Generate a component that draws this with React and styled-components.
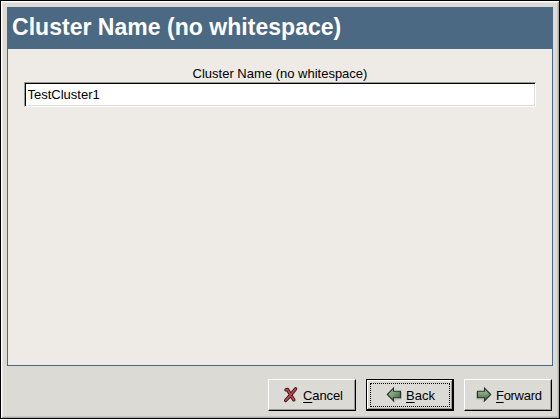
import React from 'react';
import styled, { createGlobalStyle } from 'styled-components';

const Global = createGlobalStyle`
  * { box-sizing: border-box; }
  body { margin: 0; overflow: hidden; }
`;
const Window = styled.main`
  width: 560px;
  height: 419px;
  background: #dcdad5;
  border: 1px solid #000;
  box-shadow: inset 1px 1px #fff, inset -1px -1px #aaa9a6, inset 2px 2px #ece7e5, inset -2px -2px #c8c6c2;
  padding: 6px;
  display: flex;
  flex-direction: column;
  color: #000;
  font: 13px/15px "Liberation Sans", Arial, sans-serif;
`;
const Panel = styled.section`
  height: 359px;
  background: #eeebe6;
  border: 1px solid #4b6983;
  display: flex;
  flex-direction: column;
`;
const Header = styled.h1`
  margin: 0;
  height: 41px;
  flex: none;
  background: #4b6983;
  color: #fff;
  padding: 5px 4px;
  font-size: 23px;
  line-height: 28px;
  letter-spacing: 0.03px;
  font-weight: bold;
  white-space: nowrap;
`;
const Field = styled.label`
  display: flex;
  flex-direction: column;
  padding: 17px 16px 0;
`;
const Caption = styled.span`
  height: 16px;
  text-align: center;
  line-height: 16px;
`;
const Input = styled.input`
  width: 512px;
  height: 25px;
  background: #fff;
  border: 1px solid;
  border-color: #9c9a94 #fff #fff #9c9a94;
  box-shadow: inset 1px 1px #000, inset -1px -1px #dcdad5;
  outline: none;
  padding: 1px 3px 2px 2.5px;
  color: #000;
  font: 13px/20px "Liberation Sans", Arial, sans-serif;
`;
const Actions = styled.footer`
  display: flex;
  justify-content: flex-end;
  gap: 10px;
  padding: 13px 1px 0 0;
`;
const Button = styled.button`
  width: 88px;
  height: 32px;
  display: flex;
  align-items: center;
  justify-content: flex-start;
  gap: 4px;
  padding: 0 0 0 ${p => p.$start};
  background: #dcdad5;
  color: #000;
  border: 1px solid;
  border-color: ${p => p.$active ? '#000' : '#fff #000 #000 #fff'};
  box-shadow: ${p => p.$active
    ? 'inset -1px -1px #000, inset 1px 1px #fff, inset -2px -2px #9c9a94'
    : 'inset -1px -1px #9c9a94'};
  outline: ${p => p.$active ? '1px dotted #000' : 'none'};
  outline-offset: -5px;
  font: 13px/15px "Liberation Sans", Arial, sans-serif;
  letter-spacing: ${p => p.$spacing || '0'};
`;
const Mnemonic = styled.span`
  text-decoration: underline;
  text-decoration-thickness: 1px;
  text-underline-offset: 2px;
`;
const Icon = styled.svg`
  width: 16px;
  height: 16px;
  flex: none;
  overflow: visible;
`;

function CancelIcon() {
  return (
    <Icon viewBox="0 0 16 16" fill="none" strokeLinecap="round" strokeLinejoin="round">
      <path d="M3 2.8 4.5 2.4 7.3 7.4 10.8 12.8M12.6 1.9 8.5 6.8 5.9 10 2.7 13.4" stroke="#201314" strokeWidth="3.4" />
      <path d="M3 2.8 4.5 2.4 7.3 7.4 10.8 12.8M12.6 1.9 8.5 6.8 5.9 10 2.7 13.4" stroke="#c5424d" strokeWidth="1.9" />
    </Icon>
  );
}
function ArrowIcon({ forward }) {
  return (
    <Icon viewBox="0 0 16 16">
      <defs>
        <linearGradient id={forward ? 'forward' : 'back'} x1="0" y1="0" x2={forward ? '0' : '1'} y2="1">
          <stop offset="0" stopColor="#a9c4a6" />
          <stop offset=".45" stopColor="#7da27a" />
          <stop offset="1" stopColor="#305433" />
        </linearGradient>
      </defs>
      <g transform={forward ? 'translate(16 0) scale(-1 1)' : undefined}>
        <path d="M2 8.5 9 15v-3H15.5V5" fill="none" stroke="#b9b8b2" strokeWidth="1" />
        <path d="M1.3 7.5 7.5 1.2v3.1H14.5v6.4H7.5v3.3Z" fill={forward ? 'url(#forward)' : 'url(#back)'} stroke="#283228" strokeWidth="1.1" />
      </g>
    </Icon>
  );
}

export default function App() {
  return (
    <>
      <Global />
      <Window>
        <Panel>
          <Header>Cluster Name (no whitespace)</Header>
          <Field>
            <Caption>Cluster Name (no whitespace)</Caption>
            <Input defaultValue="TestCluster1" spellCheck={false} />
          </Field>
        </Panel>
        <Actions>
          <Button $start="14px" $spacing="-0.1px"><CancelIcon /><span><Mnemonic>C</Mnemonic>ancel</span></Button>
          <Button $active $start="19px"><ArrowIcon /><span><Mnemonic>B</Mnemonic>ack</span></Button>
          <Button $start="11px" $spacing="-0.3px"><ArrowIcon forward /><span><Mnemonic>F</Mnemonic>orward</span></Button>
        </Actions>
      </Window>
    </>
  );
}
